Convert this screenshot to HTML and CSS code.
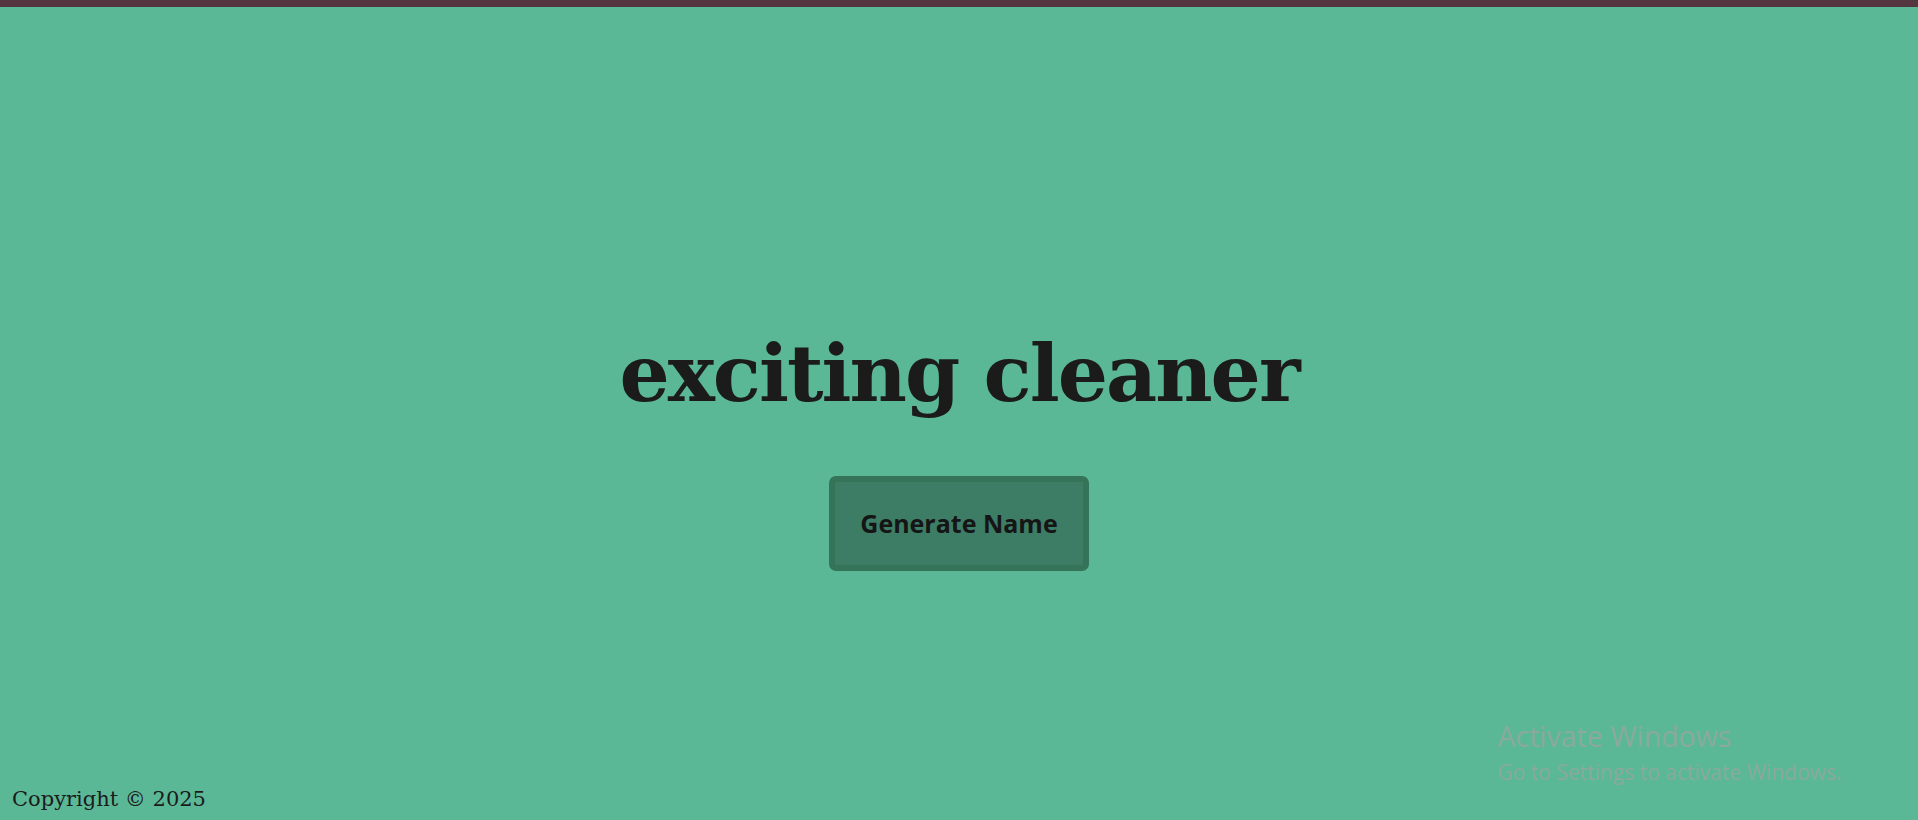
FILE: index.html
```html
<!DOCTYPE html>
<html lang="en">
<head>
<meta charset="utf-8">
<title>Name Generator</title>
<link rel="stylesheet" href="styles.css">
</head>
<body>
<main class="stage">
  <h1 class="name">exciting cleaner</h1>
  <button class="generate" type="button">Generate Name</button>
</main>
<footer class="footer">Copyright © 2025</footer>
<div class="watermark">
  <div class="wm-title">Activate Windows</div>
  <div class="wm-sub">Go to Settings to activate Windows.</div>
</div>
</body>
</html>
```
FILE: styles.css
```css
html, body {
  height: 100%;
}
body {
  margin: 0;
  box-sizing: border-box;
  border-top: 7px solid #553640;
  background: #5bb897;
  display: flex;
  flex-direction: column;
  font-family: "DejaVu Serif", Georgia, serif;
  color: #1c1b1b;
}
.stage {
  flex: 1;
  display: flex;
  flex-direction: column;
  align-items: center;
  justify-content: center;
  padding-top: 104px;
}
.name {
  margin: 0 0 54px;
  font-family: "DejaVu Serif", Georgia, serif;
  font-weight: bold;
  font-size: 79px;
  line-height: 1.2;
  letter-spacing: -2px;
  color: #1c1b1b;
}
.generate {
  width: 260px;
  height: 95px;
  border: 6px solid #357459;
  border-radius: 7px;
  background: #3d7d66;
  font-family: "Open Sans", "Noto Sans", sans-serif;
  font-weight: bold;
  font-size: 25px;
  color: #151515;
  cursor: pointer;
}
.footer {
  padding: 0 12px 8px;
  font-family: "DejaVu Serif", Georgia, serif;
  font-size: 21px;
  line-height: 1.2;
  color: #1c1b1b;
}
.watermark {
  position: fixed;
  left: 1498px;
  top: 718px;
  font-family: "Open Sans", "Noto Sans", sans-serif;
  color: #8ba99c;
}
.wm-title {
  font-size: 28.5px;
  line-height: 36px;
}
.wm-sub {
  font-size: 21px;
  line-height: 36px;
}
```
